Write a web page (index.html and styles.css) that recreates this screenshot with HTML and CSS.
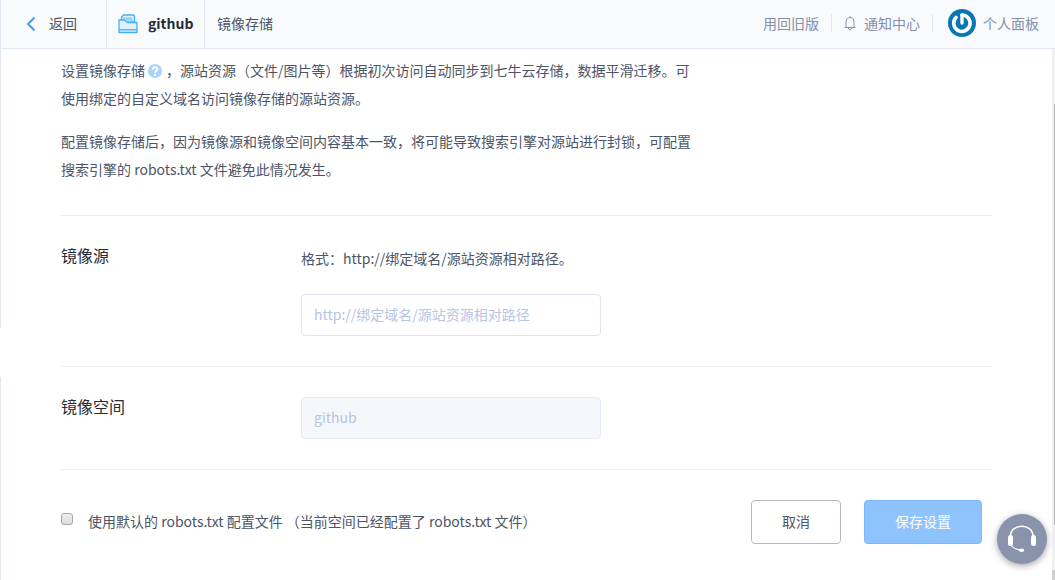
FILE: index.html
```html
<!DOCTYPE html>
<html lang="zh-CN">
<head>
<meta charset="utf-8">
<title>镜像存储</title>
<link rel="stylesheet" href="styles.css">
</head>
<body>
<div class="app">
  <div class="rail"><span class="rail-top"></span><span class="rail-bottom"></span></div>
  <div class="page">
    <header class="topbar">
      <a class="back" href="#"><svg width="10" height="16" viewBox="0 0 10 16" fill="none" stroke="#3f96f5" stroke-width="1.800"><path d="M8.500 1.500 2 8l6.500 6.500"/></svg>返回</a>
      <div class="bucket">
        <svg width="20" height="20" viewBox="0 0 20 20" fill="#dff1fd" stroke="#45b0fb" stroke-width="1.300" stroke-linejoin="round"><path d="M3.500 7V3.500l2-2.500h9.500q1.500 0 1.500 1.500V8z"/><path d="M6 4h7.500v4H6z" fill="#a5d8fa" stroke="#8fcffa"/><path d="M1 6h5l3.500 2.500H19v10H1z"/><path d="M1 15.800h18"/></svg>
        <strong>github</strong>
      </div>
      <div class="crumb">镜像存储</div>
      <nav class="links">
        <a class="link old" href="#">用回旧版</a>
        <a class="link notice" href="#"><svg width="12" height="15" viewBox="0 0 12 15" fill="none" stroke="#8490ab"><path d="M2 11.500V6C2 3 3.700 1.500 6 1.500S10 3 10 6v5.500M.5 11.500h11M4.500 12q0 1.800 1.500 1.800T7.500 12M6 1.500V.5"/></svg>通知中心</a>
        <a class="link panel" href="#"><svg width="28" height="28" viewBox="0 0 28 28"><circle cx="14" cy="14" r="14" fill="#0875b7"/><path d="M14 6A8.200 8.200 0 1 1 8 8.500" fill="none" stroke="#fff" stroke-width="3.600" stroke-linecap="round"/><path d="M14 6v8" fill="none" stroke="#fff" stroke-width="3.400" stroke-linecap="round"/></svg>个人面板</a>
      </nav>
    </header>
    <div class="body">
      <main class="content">
        <section class="intro">
          <p>设置镜像存储<svg class="help" width="14" height="14" viewBox="0 0 14 14"><circle cx="7" cy="7" r="7" fill="#a9d3fc"/><path d="M4.700 5.500C4.700 2.600 9.400 2.600 9.400 5.200 9.400 6.900 7 6.900 7 8.700" fill="none" stroke="#fff" stroke-width="2"/><circle cx="7" cy="10.900" r="1.200" fill="#fff"/></svg>，源站资源（文件/图片等）根据初次访问自动同步到七牛云存储，数据平滑迁移。可使用绑定的自定义域名访问镜像存储的源站资源。</p>
          <p>配置镜像存储后，因为镜像源和镜像空间内容基本一致，将可能导致搜索引擎对源站进行封锁，可配置搜索引擎的 robots.txt 文件避免此情况发生。</p>
        </section>
        <section class="row">
          <label class="title" for="source">镜像源</label>
          <div class="field">
            <p class="hint">格式：http://绑定域名/源站资源相对路径。</p>
            <input id="source" class="input" type="text" placeholder="http://绑定域名/源站资源相对路径">
          </div>
        </section>
        <section class="row">
          <label class="title" for="space">镜像空间</label>
          <div class="field"><input id="space" class="input" type="text" value="github" disabled></div>
        </section>
        <section class="actions">
          <input id="robots" class="check" type="checkbox">
          <label class="check-label" for="robots">使用默认的 robots.txt 配置文件 （当前空间已经配置了 robots.txt 文件）</label>
          <button class="button cancel" type="button">取消</button>
          <button class="button save" type="button">保存设置</button>
        </section>
      </main>
      <div class="scroll"><span class="thumb"></span><span class="corner"></span></div>
    </div>
  </div>
  <button class="support" type="button" aria-label="客服"><svg width="30" height="30" viewBox="0 0 30 30" fill="none" stroke="#fff"><path d="M3.500 12C4 -1 25.500 -1 26 12" stroke-width="1.500"/><path d="M3.500 19C4.500 24 8 25.500 14 26" stroke-width="1.200"/><rect x="1" y="11" width="5" height="11" rx="2.500" fill="#fff" stroke="none"/><rect x="24" y="11" width="5" height="11" rx="2.500" fill="#fff" stroke="none"/><ellipse cx="14.500" cy="26.300" rx="2.800" ry="1.700" fill="#fff" stroke="none"/></svg></button>
</div>
</body>
</html>
```
FILE: styles.css
```css
* { box-sizing: border-box; }
body {
  margin: 0;
  color: #4c5466;
  background: #fff;
  font: 14px/28px "Noto Sans CJK SC", sans-serif;
}
a { color: inherit; text-decoration: none; }
p { margin: 0; }
svg { flex: none; }
input, button { font: inherit; }
.app { display: flex; min-height: 100vh; }
.rail { width: 1px; display: flex; flex-direction: column; gap: 49px; }
.rail span { background: #e2e6f1; }
.rail-top { height: 328px; }
.rail-bottom { flex: 1; }
.page { flex: 1; display: flex; flex-direction: column; min-width: 0; }
.topbar {
  display: flex;
  height: 49px;
  line-height: 26px;
  background: #f9fafc;
  border-bottom: 1px solid #e2e6f1;
}
.back, .bucket, .crumb { display: flex; align-items: center; padding-bottom: 2px; }
.back { width: 106px; padding-left: 25px; gap: 13px; border-right: 1px solid #e2e6f1; }
.bucket { width: 98px; padding-left: 11px; gap: 10px; color: #272b38; border-right: 1px solid #e2e6f1; }
.back svg, .bucket svg { margin-top: 2px; }
.crumb { padding-left: 12px; }
.links { display: flex; align-items: center; margin-left: auto; padding: 0 16px 2px 0; color: #8490ab; }
.link { display: flex; align-items: center; height: 18px; }
.old { padding-right: 12px; border-right: 1px solid #e2e6f1; }
.notice { padding: 0 12px; gap: 8px; border-right: 1px solid #e2e6f1; }
.panel { padding-left: 15px; gap: 7px; }
.body { flex: 1; display: flex; }
.content { flex: 1; padding: 7px 60px 0; }
.intro { padding-bottom: 32px; border-bottom: 1px solid #eceef4; }
.intro p { max-width: 632px; }
.intro p + p { margin-top: 15px; }
.help { vertical-align: -2px; margin: 0 4px 0 3px; }
.row {
  display: grid;
  grid-template-columns: 240px 1fr;
  padding: 30px 0;
  border-bottom: 1px solid #eceef4;
}
.title { font-size: 16px; line-height: 18px; color: #272b38; }
.hint { margin-bottom: 24px; line-height: 24px; }
.input {
  display: block;
  width: 300px;
  height: 42px;
  padding: 0 12px 3px;
  color: #b6c4e0;
  background: #fff;
  border: 1px solid #dfe4f0;
  border-radius: 4px;
}
.input::placeholder { color: #b6c4e6; }
.input:disabled { background: #f5f7fb; border-color: #e6eaf4; }
.actions { display: flex; align-items: center; padding: 30px 10px 36px 0; }
.check {
  appearance: none;
  width: 12px;
  height: 12px;
  margin: 0 15px 6px 0;
  background: linear-gradient(#eee, #dcdcdc);
  border: 1px solid #a8a8a8;
  border-radius: 3px;
}
.check-label { margin-right: auto; padding-bottom: 3px; }
.button { height: 44px; padding: 0 6px 2px; background: #fff; border: 1px solid #b5b9c7; border-radius: 4px; color: #4c5466; }
.cancel { width: 90px; margin-right: 23px; }
.save { width: 118px; color: #fff; background: #8ec3fd; border-color: #77b7fc; }
.scroll { width: 3px; display: flex; flex-direction: column; align-items: flex-end; background: #f0f0f0; padding-top: 55px; }
.thumb { width: 1px; height: 421px; background: #b8b8b8; }
.corner { width: 3px; height: 10px; margin-top: auto; background: #d0d0d0; }
.support {
  position: fixed;
  right: 8px;
  bottom: 16px;
  display: grid;
  place-items: center;
  width: 50px;
  height: 50px;
  padding: 0;
  border: 0;
  border-radius: 50%;
  background: #8994ac;
  box-shadow: 0 2px 7px rgba(0, 0, 0, .35);
}
```
